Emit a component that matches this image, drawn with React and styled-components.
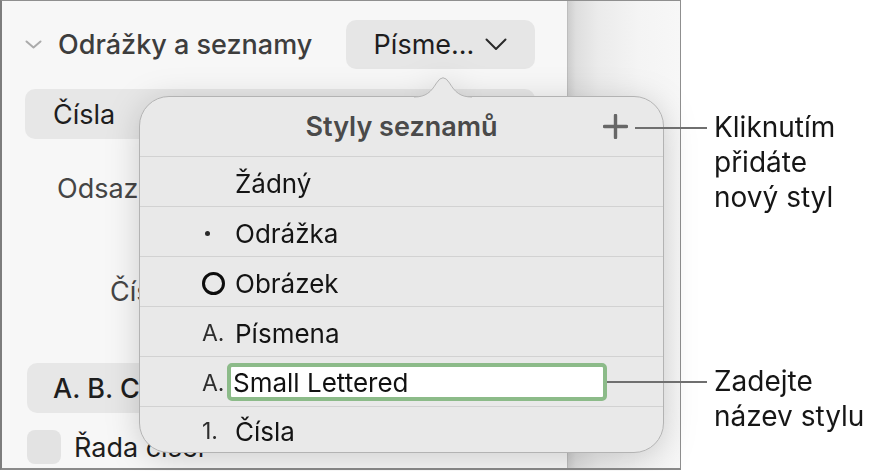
import React from "react";
import styled, { createGlobalStyle } from "styled-components";

const Global = createGlobalStyle`
  html, body { margin: 0; padding: 0; background: #ffffff; }
  body { font-family: Inter, "Noto Sans", "Liberation Sans", sans-serif; -webkit-font-smoothing: antialiased; }
  * { box-sizing: border-box; }
`;

const Page = styled.div`
  position: relative;
  width: 886px;
  height: 471px;
  display: flex;
  background: #fff;
  overflow: hidden;
`;

const Frame = styled.div`
  width: 681px;
  height: 470px;
  border: 1px solid #8f8f8f;
  border-left: 2px solid #7d7d7d;
  border-bottom: 2px solid #8a8a8a;
  display: flex;
  overflow: hidden;
`;

const Sidebar = styled.div`
  width: 565px;
  flex: none;
  background: #f7f7f7;
  display: flex;
  flex-direction: column;
  padding-top: 18px;
`;

const Canvas = styled.div`
  flex: 1;
  border-left: 1px solid #bdbdbd;
  background: linear-gradient(90deg, #cdcdcd 0px, #dedede 8px, #ebebeb 30px, #f4f4f4 70px, #f7f7f7 100%);
`;

const SectionHeader = styled.div`
  height: 50px;
  display: flex;
  align-items: center;
  padding: 0 32px 0 23px;
`;

const SectionTitle = styled.div`
  font-size: 27px;
  font-weight: 500;
  color: #3d3d3d;
  margin-left: 16px;
  flex: 1;
`;

const DropButton = styled.div`
  width: 189px;
  height: 49px;
  border-radius: 10px;
  background: #e6e6e6;
  display: flex;
  align-items: center;
  justify-content: center;
  gap: 11px;
  font-size: 27px;
  color: #1e1e1e;
`;

const Pill = styled.div`
  height: 50px;
  margin: ${(p) => p.$mt}px 32px 0 ${(p) => p.$ml}px;
  border-radius: 10px;
  background: #e7e7e7;
  display: flex;
  align-items: center;
  padding-left: ${(p) => p.$pl}px;
  font-size: 27px;
  font-weight: ${(p) => (p.$bold ? 500 : 400)};
  color: #1e1e1e;
`;

const FieldRow = styled.div`
  height: 50px;
  margin-top: ${(p) => p.$mt}px;
  padding-left: ${(p) => p.$pl}px;
  display: flex;
  align-items: center;
  font-size: 27px;
  color: #454545;
`;

const CheckRow = styled.div`
  margin-top: 17px;
  padding-left: 25px;
  height: 34px;
  display: flex;
  align-items: center;
  gap: 13px;
  font-size: 27px;
  color: #1e1e1e;
`;

const CheckBox = styled.div`
  width: 34px;
  height: 34px;
  border-radius: 8px;
  background: #e3e3e3;
`;

const Popover = styled.div`
  position: absolute;
  left: 139px;
  top: 96px;
  width: 525px;
  height: 357px;
  border: 1px solid #b3b3b3;
  border-radius: 30px;
  background: #e9e9e9;
  filter: drop-shadow(0 5px 16px rgba(0, 0, 0, 0.17));
  display: flex;
  flex-direction: column;
  z-index: 2;
`;

const Arrow = styled.svg`
  position: absolute;
  left: 274px;
  top: -25px;
  display: block;
`;

const PopHeader = styled.div`
  height: 59px;
  flex: none;
  display: grid;
  grid-template-columns: 1fr auto 1fr;
  align-items: center;
`;

const PopTitle = styled.div`
  grid-column: 2;
  font-size: 27px;
  font-weight: 600;
  color: #4a4a4a;
`;

const PlusButton = styled.div`
  grid-column: 3;
  justify-self: end;
  margin-right: 35px;
  width: 25px;
  height: 25px;
  display: flex;
`;

const List = styled.div`
  flex: 1;
  display: flex;
  flex-direction: column;
`;

const Row = styled.div`
  height: 50px;
  flex: none;
  border-top: 1px solid #d2d2d2;
  display: flex;
  align-items: center;
  padding: 3px 0 0 62px;
  &:last-child {
    flex: 1;
    height: auto;
  }
`;

const Marker = styled.div`
  width: 33px;
  flex: none;
  display: flex;
  align-items: center;
  font-size: 23px;
  color: #2e2e2e;
`;

const Dot = styled.span`
  width: 5px;
  height: 5px;
  border-radius: 50%;
  background: #2a2a2a;
  margin-left: 3px;
`;

const Ring = styled.span`
  width: 23px;
  height: 23px;
  border-radius: 50%;
  border: 3.5px solid #0d0d0d;
`;

const Label = styled.div`
  font-size: 26px;
  color: #141414;
`;

const NameField = styled.div`
  width: 380px;
  height: 38px;
  margin: -3px 0 0 -8px;
  border: 4px solid #8cbb89;
  border-radius: 5px;
  background: #fff;
  display: flex;
  align-items: center;
  padding: 1px 0 0 2px;
  font-size: 26px;
  color: #111;
`;

const Annotation = styled.div`
  position: absolute;
  left: ${(p) => p.$left}px;
  top: ${(p) => p.$top}px;
  display: flex;
  align-items: flex-start;
  z-index: 3;
`;

const Leader = styled.div`
  width: ${(p) => p.$w}px;
  height: 2px;
  margin-top: 17px;
  margin-right: 7px;
  background: #6f6f6f;
`;

const Note = styled.div`
  font-size: 28px;
  line-height: 35px;
  color: #161616;
`;

const ChevronSmall = () => (
  <svg width="17" height="9" viewBox="0 0 17 9">
    <path d="M1.5 1.5 L8.5 7.5 L15.5 1.5" fill="none" stroke="#ababab" strokeWidth="2" strokeLinecap="round" strokeLinejoin="round" />
  </svg>
);

const ChevronDown = () => (
  <svg width="22" height="13" viewBox="0 0 22 13">
    <path d="M1.5 1.5 L11 11 L20.5 1.5" fill="none" stroke="#2a2a2a" strokeWidth="2" strokeLinecap="round" strokeLinejoin="round" />
  </svg>
);

const PlusIcon = () => (
  <svg width="25" height="25" viewBox="0 0 25 25">
    <path d="M12.5 1.5 V23.5 M1.5 12.5 H23.5" fill="none" stroke="#676767" strokeWidth="3.4" strokeLinecap="round" />
  </svg>
);

const rows = [
  { marker: null, label: "Žádný" },
  { marker: "dot", label: "Odrážka" },
  { marker: "ring", label: "Obrázek" },
  { marker: "A.", label: "Písmena" },
  { marker: "A.", label: "Small Lettered", editing: true },
  { marker: "1.", label: "Čísla" },
];

function renderMarker(m) {
  if (m === "dot") return <Dot />;
  if (m === "ring") return <Ring />;
  return m;
}

export default function App() {
  return (
    <Page>
      <Global />
      <Frame>
        <Sidebar>
          <SectionHeader>
            <ChevronSmall />
            <SectionTitle>Odrážky a seznamy</SectionTitle>
            <DropButton>
              <span>Písme...</span>
              <ChevronDown />
            </DropButton>
          </SectionHeader>
          <Pill $mt={20} $ml={23} $pl={28}>Čísla</Pill>
          <FieldRow $mt={24} $pl={55}>Odsazení</FieldRow>
          <FieldRow $mt={53} $pl={108}>Číslování</FieldRow>
          <Pill $mt={47} $ml={25} $pl={26} $bold>A. B. C.</Pill>
          <CheckRow>
            <CheckBox />
            <span>Řada čísel</span>
          </CheckRow>
        </Sidebar>
        <Canvas />
      </Frame>

      <Popover>
        <Arrow width="58" height="26" viewBox="0 0 58 26">
          <path d="M0 26 L0 25 C12 25 17 20 22.5 11 Q29 0.5 35.5 11 C41 20 46 25 58 25 L58 26 Z" fill="#e9e9e9" />
          <path d="M0 25 C12 25 17 20 22.5 11 Q29 0.5 35.5 11 C41 20 46 25 58 25" fill="none" stroke="#b3b3b3" strokeWidth="1" />
        </Arrow>
        <PopHeader>
          <PopTitle>Styly seznamů</PopTitle>
          <PlusButton>
            <PlusIcon />
          </PlusButton>
        </PopHeader>
        <List>
          {rows.map((r) => (
            <Row key={r.label}>
              <Marker>{renderMarker(r.marker)}</Marker>
              {r.editing ? <NameField>{r.label}</NameField> : <Label>{r.label}</Label>}
            </Row>
          ))}
        </List>
      </Popover>

      <Annotation $left={635} $top={110}>
        <Leader $w={72} />
        <Note>
          Kliknutím
          <br />
          přidáte
          <br />
          nový styl
        </Note>
      </Annotation>
      <Annotation $left={607} $top={364}>
        <Leader $w={100} />
        <Note>
          Zadejte
          <br />
          název stylu
        </Note>
      </Annotation>
    </Page>
  );
}
